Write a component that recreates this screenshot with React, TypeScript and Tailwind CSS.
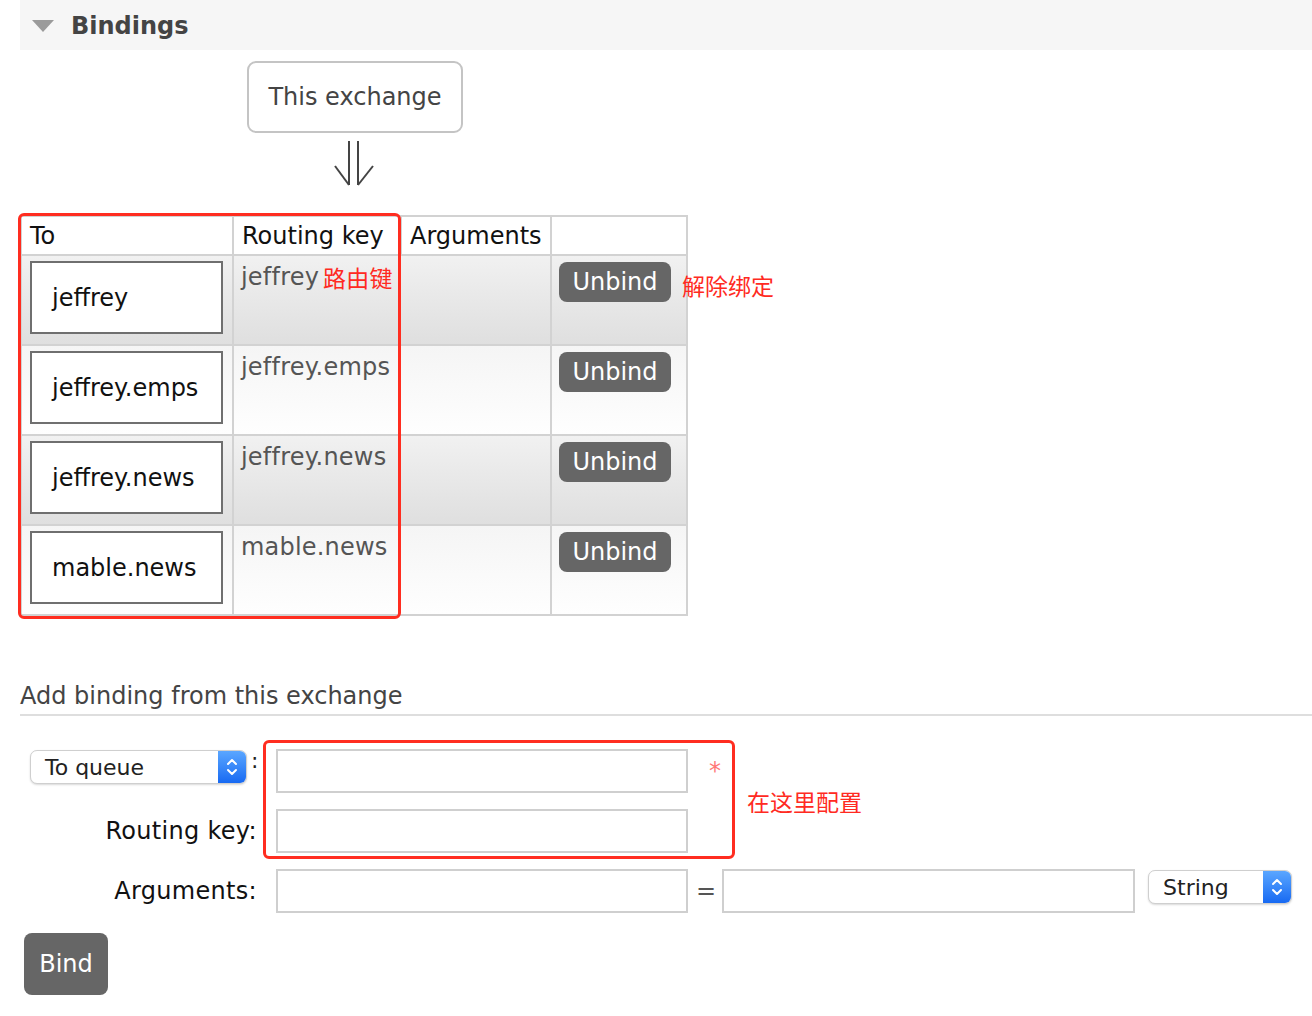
import React from "react";

const FONT = { fontFamily: '"DejaVu Sans", Verdana, sans-serif' };
const CJK = { fontFamily: '"Noto Sans CJK SC", sans-serif' };

const rows = [
  { to: "jeffrey", key: "jeffrey", note: true },
  { to: "jeffrey.emps", key: "jeffrey.emps" },
  { to: "jeffrey.news", key: "jeffrey.news" },
  { to: "mable.news", key: "mable.news" },
];

function Stepper() {
  return (
    <div className="w-[28px] self-stretch rounded-r-[6px] bg-linear-to-b from-[#5aa6ff] to-[#1769f2] flex items-center justify-center">
      <svg width="14" height="22" viewBox="0 0 14 22" fill="none" stroke="white" strokeWidth="2" strokeLinecap="round" strokeLinejoin="round">
        <path d="M3 8 L7 4 L11 8" />
        <path d="M3 14 L7 18 L11 14" />
      </svg>
    </div>
  );
}

function Select({ label, width }: { label: string; width: string }) {
  return (
    <div className={`${width} h-[34px] flex bg-white border border-[#cfcfcf] rounded-[7px] shadow-[0_1px_2px_rgba(0,0,0,0.15)]`}>
      <div className="flex-1 flex items-center pl-[14px] text-[22px] text-[#222]">{label}</div>
      <Stepper />
    </div>
  );
}

export default function App() {
  return (
    <div className="w-[1312px] h-[1016px] bg-white overflow-hidden text-[#222]" style={FONT}>
      {/* section header */}
      <div className="ml-[20px] h-[50px] bg-[#f6f6f6] flex items-center pt-[1px]">
        <svg className="ml-[12px]" width="22" height="12" viewBox="0 0 22 12">
          <path d="M0 0 L22 0 L11 12 Z" fill="#9b9b9b" />
        </svg>
        <span className="ml-[17px] text-[24px] font-bold text-[#444]">Bindings</span>
      </div>

      {/* exchange box */}
      <div className="ml-[247px] mt-[11px] w-[216px] h-[72px] border-2 border-[#c4c4c4] rounded-[9px] flex items-center justify-center text-[24px] text-[#444]">
        This exchange
      </div>
      <svg className="ml-[333px] mt-[6px]" width="42" height="48" viewBox="0 0 42 48" fill="none" stroke="#444" strokeWidth="2">
        <path d="M16 2 L16 46" />
        <path d="M25 2 L25 46" />
        <path d="M2 27 L16 46" />
        <path d="M40 27 L25 46" />
      </svg>

      {/* bindings table */}
      <div className="relative ml-[20px] mt-[28px] w-[668px]">
        <div className="border-2 border-[#d2d2d2]">
          <div className="flex h-[39px] bg-white border-b-2 border-[#d2d2d2] text-[24px] text-[#111]">
            <div className="w-[212px] border-r-2 border-[#d2d2d2] pl-[8px] flex items-center">To</div>
            <div className="w-[168px] border-r-2 border-[#d2d2d2] pl-[8px] flex items-center">Routing key</div>
            <div className="w-[150px] border-r-2 border-[#d2d2d2] pl-[8px] flex items-center">Arguments</div>
            <div className="flex-1" />
          </div>
          {rows.map((r, i) => (
            <div
              key={r.to}
              className={`flex ${i < rows.length - 1 ? "h-[90px] border-b-2 border-[#d2d2d2]" : "h-[88px]"} ${
                i % 2 === 0 ? "bg-linear-to-b from-[#f1f1f1] to-[#dfdfdf]" : "bg-linear-to-b from-[#f5f5f5] to-[#fefefe]"
              }`}
            >
              <div className="w-[212px] border-r-2 border-[#d2d2d2] pl-[8px] pt-[5px]">
                <div className="w-[193px] h-[73px] bg-white border-2 border-[#6f6f6f] flex items-center pl-[20px] text-[24px] text-[#111]">
                  {r.to}
                </div>
              </div>
              <div className="w-[318px] border-r-2 border-[#d2d2d2] pl-[7px] pt-[7px] text-[24px] leading-[28px] text-[#555] flex items-start tracking-[0.2px]">
                <span>{r.key}</span>
                {r.note && (
                  <span className="ml-[4px] text-[23px] text-[#ff2a22]" style={CJK}>
                    路由键
                  </span>
                )}
              </div>
              <div className="flex-1 pl-[7px] pt-[6px]">
                <div className="w-[112px] h-[40px] rounded-[8px] bg-[#666] text-white text-[24px] flex items-center justify-center">
                  Unbind
                </div>
              </div>
            </div>
          ))}
        </div>
        <div className="absolute left-[-2px] top-[-2px] w-[383px] h-[406px] border-[3px] border-[#ff2d20] rounded-[6px]" />
        <div className="absolute left-[662px] top-[53px] text-[23px] text-[#ff2a22] whitespace-nowrap" style={CJK}>
          解除绑定
        </div>
      </div>

      {/* add binding */}
      <div className="ml-[20px] mt-[62px] h-[38px] border-b-2 border-[#dedede] text-[24px] leading-[36px] text-[#444]">
        Add binding from this exchange
      </div>

      <div className="relative ml-[20px] mt-[33px]">
        <div className="flex items-start h-[44px]">
          <div className="w-[237px] flex items-start pt-[1px]">
            <div className="ml-[10px]">
              <Select label="To queue" width="w-[217px]" />
            </div>
            <span className="ml-[4px] text-[22px] leading-[22px] text-[#222]">:</span>
          </div>
          <div className="ml-[19px] w-[412px] h-[44px] border-2 border-[#cfcfcf] bg-white" />
          <span className="ml-[21px] mt-[4px] text-[24px] text-[#f77]">*</span>
        </div>

        <div className="flex items-center h-[44px] mt-[16px]">
          <div className="w-[237px] text-right text-[24px] text-[#111] tracking-[0.3px]">Routing key:</div>
          <div className="ml-[19px] w-[412px] h-[44px] border-2 border-[#cfcfcf] bg-white" />
        </div>

        <div className="flex items-center h-[44px] mt-[16px]">
          <div className="w-[237px] text-right text-[24px] text-[#111] tracking-[0.3px]">Arguments:</div>
          <div className="ml-[19px] w-[412px] h-[44px] border-2 border-[#cfcfcf] bg-white" />
          <span className="ml-[8px] text-[24px] text-[#555]">=</span>
          <div className="ml-[6px] w-[413px] h-[44px] border-2 border-[#cfcfcf] bg-white" />
          <div className="ml-[13px] self-start mt-[1px]">
            <Select label="String" width="w-[144px]" />
          </div>
        </div>

        <div className="mt-[20px] ml-[4px] w-[84px] h-[62px] rounded-[8px] bg-[#666] text-white text-[24px] flex items-center justify-center">
          Bind
        </div>

        <div className="absolute left-[243px] top-[-9px] w-[472px] h-[119px] border-[3px] border-[#ff2d20] rounded-[6px]" />
        <div className="absolute left-[727px] top-[35px] text-[23px] text-[#ff2a22] whitespace-nowrap" style={CJK}>
          在这里配置
        </div>
      </div>
    </div>
  );
}
